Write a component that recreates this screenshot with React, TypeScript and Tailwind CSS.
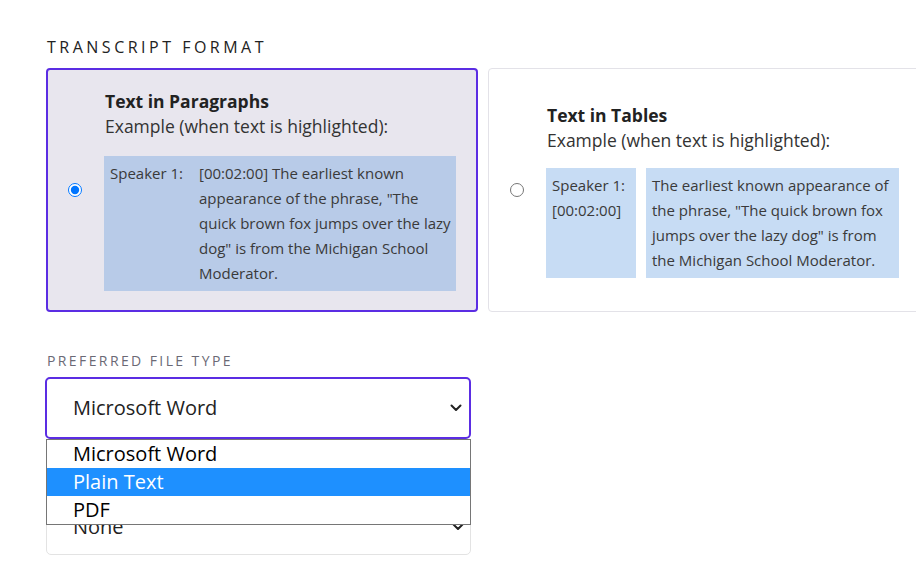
import React from "react";

const Chevron = () => (
  <svg width="12" height="8" viewBox="0 0 12 8" className="block">
    <path d="M1.5 1.5 L6 6 L10.5 1.5" fill="none" stroke="#222" strokeWidth="2" strokeLinecap="round" strokeLinejoin="round" />
  </svg>
);

export default function App() {
  return (
    <div
      className="relative w-[916px] h-[565px] overflow-hidden bg-white pl-[46px] pt-[35px]"
      style={{ fontFamily: '"Open Sans", "Noto Sans", sans-serif' }}
    >
      <div className="ml-[1px] text-[16px] leading-[24px] tracking-[3.5px] text-[#222]">TRANSCRIPT FORMAT</div>

      <div className="mt-[9px] flex gap-[10px]">
        {/* Left card */}
        <div className="w-[432px] h-[244px] shrink-0 rounded-[4px] border-2 border-[#5b2de3] bg-[#e8e6ee] flex items-center pl-[20px] pr-[20px]">
          <input type="radio" name="fmt" defaultChecked className="m-0 w-[14px] h-[14px] shrink-0" />
          <div className="ml-[23px] flex-1 text-[#222]">
            <div className="text-[17.5px] leading-[25px] font-bold">Text in Paragraphs</div>
            <div className="text-[17.5px] leading-[25px] text-[#333]">Example (when text is highlighted):</div>
            <div className="-ml-[1px] mt-[17px] bg-[#b8cbe8] pl-[6px] pr-[4px] py-[5px] flex text-[15px] leading-[25px] text-[#3a3a3a]">
              <div className="w-[89px] shrink-0">Speaker 1:</div>
              <div className="flex-1">
                [00:02:00] The earliest known appearance of the phrase, "The quick brown fox jumps over the lazy dog" is from the Michigan School Moderator.
              </div>
            </div>
          </div>
        </div>

        {/* Right card */}
        <div className="w-[432px] h-[244px] shrink-0 rounded-[4px] border border-[#e3e2e8] bg-white flex items-center pl-[21px] pr-[20px]">
          <input type="radio" name="fmt" className="m-0 w-[14px] h-[14px] shrink-0" />
          <div className="ml-[23px] flex-1 text-[#222]">
            <div className="text-[17.5px] leading-[25px] font-bold">Text in Tables</div>
            <div className="text-[17.5px] leading-[25px] text-[#333]">Example (when text is highlighted):</div>
            <div className="-ml-[1px] mt-[15px] flex gap-[10px] text-[15px] leading-[25px] text-[#3a3a3a]">
              <div className="w-[90px] shrink-0 bg-[#c7dcf4] pl-[6px] py-[5px]">
                <div>Speaker 1:</div>
                <div>[00:02:00]</div>
              </div>
              <div className="w-[253px] shrink-0 bg-[#c7dcf4] pl-[6px] pr-[4px] py-[5px]">
                The earliest known appearance of the phrase, "The quick brown fox jumps over the lazy dog" is from the Michigan School Moderator.
              </div>
            </div>
          </div>
        </div>
      </div>

      <div className="mt-[39px] ml-[1px] text-[14px] leading-[20px] tracking-[2.4px] text-[#6b6975]">PREFERRED FILE TYPE</div>

      <div className="relative mt-[6px] -ml-[1px] w-[426px]">
        <div className="h-[62px] rounded-[5px] border-2 border-[#5b2de3] bg-white flex items-center justify-between pl-[26px] pr-[7px] text-[20px] text-[#222]">
          <span>Microsoft Word</span>
          <Chevron />
        </div>
        <div className="absolute left-[1px] top-full z-10 w-[425px] border border-[#767676] bg-white text-[20px] text-black">
          <div className="h-[28px] leading-[28px] pl-[26px]">Microsoft Word</div>
          <div className="h-[28px] leading-[28px] pl-[26px] bg-[#1e90ff] text-white">Plain Text</div>
          <div className="h-[28px] leading-[28px] pl-[26px]">PDF</div>
        </div>
      </div>

      <div className="mt-[56px] w-[425px] h-[60px] rounded-[5px] border border-[#e3e3e3] bg-white flex items-center justify-between pl-[26px] pr-[6px] pt-[3px] text-[20px] text-[#222]">
        <span>None</span>
        <Chevron />
      </div>
    </div>
  );
}
